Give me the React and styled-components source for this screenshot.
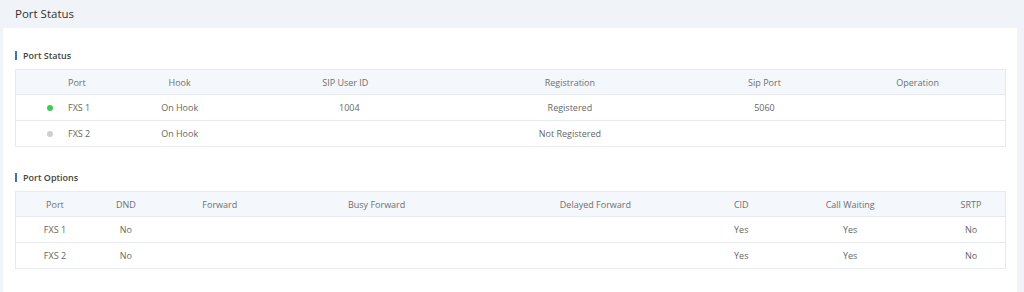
import React from "react";
import styled, { createGlobalStyle } from "styled-components";

const Global = createGlobalStyle`
  html, body { margin: 0; padding: 0; }
  body {
    background: #f0f3f7;
    font-family: "Open Sans", "Noto Sans", sans-serif;
    color: #555;
  }
`;

const Page = styled.div`
  width: 1024px;
  height: 292px;
  display: flex;
  flex-direction: column;
  overflow: hidden;
`;

const TitleBar = styled.div`
  height: 28px;
  display: flex;
  align-items: center;
  padding-left: 15px;
  font-size: 11.5px;
  color: #333;
  padding-bottom: 2px;
  box-sizing: border-box;
`;

const Panel = styled.div`
  margin: 0 7px 0 3px;
  flex: 1;
  background: #fff;
  padding: 20px 11px 0 12px;
  display: flex;
  flex-direction: column;
`;

const SectionTitle = styled.div`
  display: flex;
  align-items: center;
  gap: 6px;
  height: 14px;
  font-size: 9px;
  font-weight: 600;
  color: #444;
  margin-bottom: 7px;
  margin-top: ${(p) => p.$top || 0}px;
  &::before {
    content: "";
    width: 2px;
    height: 9px;
    background: #3d6fd1;
  }
`;

const Table = styled.div`
  border: 1px solid #e6e9ee;
  border-bottom: none;
  font-size: 9px;
  color: #666;
`;

const Row = styled.div`
  display: grid;
  grid-template-columns: ${(p) => p.$cols};
  height: ${(p) => (p.$head ? 24 : 25)}px;
  background: ${(p) => (p.$head ? "#f4f7fb" : "#fff")};
  border-bottom: 1px solid #e6e9ee;
  align-items: center;
  color: ${(p) => (p.$head ? "#6f6f6f" : "#666")};
`;

const Cell = styled.div`
  text-align: ${(p) => p.$align || "center"};
  padding-left: ${(p) => p.$pl || 0}px;
  padding-right: ${(p) => p.$pr || 0}px;
  white-space: nowrap;
  display: ${(p) => (p.$flex ? "flex" : "block")};
  align-items: center;
`;

const Dot = styled.span`
  width: 6px;
  height: 6px;
  border-radius: 50%;
  background: ${(p) => (p.$on ? "#3ec95b" : "#cfcfcf")};
  margin-right: 15px;
  flex: none;
`;

const statusCols = "126fr 76fr 256fr 194fr 196fr 143fr";
const optionCols = "78fr 64fr 124fr 190fr 248fr 44fr 174fr 68fr";

const statusRows = [
  { port: "FXS 1", on: true, hook: "On Hook", sip: "1004", reg: "Registered", sport: "5060" },
  { port: "FXS 2", on: false, hook: "On Hook", sip: "", reg: "Not Registered", sport: "" },
];

const optionRows = [
  { port: "FXS 1", dnd: "No", cid: "Yes", cw: "Yes", srtp: "No" },
  { port: "FXS 2", dnd: "No", cid: "Yes", cw: "Yes", srtp: "No" },
];

export default function App() {
  return (
    <Page>
      <Global />
      <TitleBar>Port Status</TitleBar>
      <Panel>
        <SectionTitle>Port Status</SectionTitle>
        <Table>
          <Row $head $cols={statusCols}>
            <Cell $align="left" $pl={52}>Port</Cell>
            <Cell>Hook</Cell>
            <Cell>SIP User ID</Cell>
            <Cell>Registration</Cell>
            <Cell>Sip Port</Cell>
            <Cell $pr={32}>Operation</Cell>
          </Row>
          {statusRows.map((r) => (
            <Row key={r.port} $cols={statusCols}>
              <Cell $flex $pl={31}>
                <Dot $on={r.on} />
                {r.port}
              </Cell>
              <Cell>{r.hook}</Cell>
              <Cell $pl={8}>{r.sip}</Cell>
              <Cell>{r.reg}</Cell>
              <Cell>{r.sport}</Cell>
              <Cell $pr={32}></Cell>
            </Row>
          ))}
        </Table>

        <SectionTitle $top={23}>Port Options</SectionTitle>
        <Table>
          <Row $head $cols={optionCols}>
            <Cell>Port</Cell>
            <Cell>DND</Cell>
            <Cell>Forward</Cell>
            <Cell>Busy Forward</Cell>
            <Cell>Delayed Forward</Cell>
            <Cell>CID</Cell>
            <Cell>Call Waiting</Cell>
            <Cell>SRTP</Cell>
          </Row>
          {optionRows.map((r) => (
            <Row key={r.port} $cols={optionCols}>
              <Cell>{r.port}</Cell>
              <Cell>{r.dnd}</Cell>
              <Cell></Cell>
              <Cell></Cell>
              <Cell></Cell>
              <Cell>{r.cid}</Cell>
              <Cell>{r.cw}</Cell>
              <Cell>{r.srtp}</Cell>
            </Row>
          ))}
        </Table>
      </Panel>
    </Page>
  );
}
